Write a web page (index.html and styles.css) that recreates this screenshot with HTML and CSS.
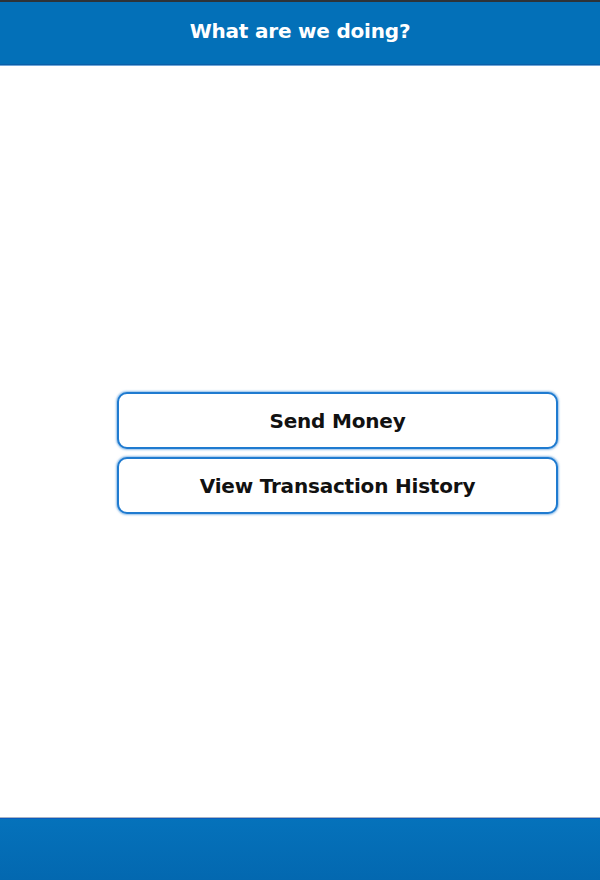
FILE: index.html
```html
<!DOCTYPE html>
<html>
<head>
<meta charset="utf-8">
<link rel="stylesheet" href="styles.css">
</head>
<body>
<div class="app">
  <header class="topbar">
    <h1 class="title">What are we doing?</h1>
  </header>
  <main class="content">
    <div class="actions">
      <button class="action">Send Money</button>
      <button class="action">View Transaction History</button>
    </div>
  </main>
  <footer class="bottombar"></footer>
</div>
</body>
</html>
```
FILE: styles.css
```css
html, body {
  margin: 0;
  padding: 0;
  height: 100%;
  background: #fff;
}
.app {
  display: flex;
  flex-direction: column;
  height: 880px;
  font-family: "DejaVu Sans", Verdana, sans-serif;
}
.topbar {
  height: 62px;
  border-top: 2px solid #2e3338;
  border-bottom: 1px solid #0a5fa8;
  box-shadow: 0 1px 0 #6fa6d8;
  background: #0370b8;
  display: flex;
  align-items: center;
  justify-content: center;
}
.title {
  margin: 0;
  color: #fff;
  font-size: 20px;
  font-weight: bold;
  letter-spacing: -0.2px;
  padding-bottom: 5px;
}
.content {
  flex: 1;
  padding-top: 327px;
}
.actions {
  margin-left: 117px;
  width: 441px;
  display: flex;
  flex-direction: column;
  gap: 8px;
}
.action {
  height: 57px;
  border: 2px solid #1f7bd0;
  border-radius: 10px;
  box-shadow: 0 0 2px 1px rgba(60, 140, 215, 0.55);
  background: #fff;
  font-family: "DejaVu Sans", Verdana, sans-serif;
  font-size: 20px;
  font-weight: bold;
  color: #111;
  letter-spacing: -0.2px;
  padding: 0;
}
.bottombar {
  height: 62px;
  border-top: 1px solid #a8b4c4;
  box-shadow: inset 0 1px 0 #0a5cbf;
  background: linear-gradient(#0572bb, #0368b0);
}
```
